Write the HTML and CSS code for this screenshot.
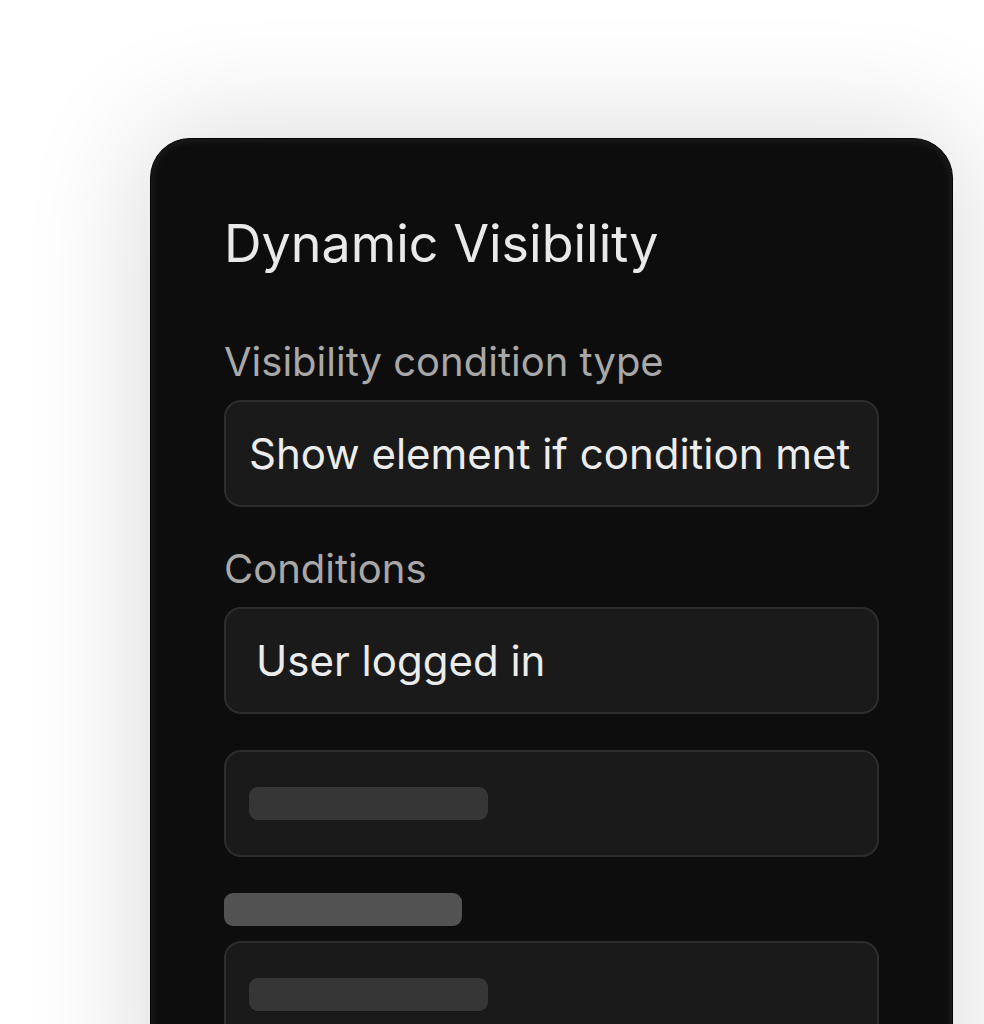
FILE: index.html
```html
<!DOCTYPE html>
<html>
<head>
<meta charset="utf-8">
<link rel="stylesheet" href="styles.css">
</head>
<body>
<div class="stage">
  <div class="card">
    <h1 class="title">Dynamic Visibility</h1>
    <div class="label">Visibility condition type</div>
    <div class="field"><span class="value value-a">Show element if condition met</span></div>
    <div class="label label-2">Conditions</div>
    <div class="field"><span class="value value-b">User logged in</span></div>
    <div class="field field-ph"><span class="ph"></span></div>
    <div class="label-ph"></div>
    <div class="field field-ph"><span class="ph"></span></div>
  </div>
</div>
</body>
</html>
```
FILE: styles.css
```css
html, body {
  margin: 0;
  padding: 0;
  background: #ffffff;
  height: 1024px;
  overflow: hidden;
}
.stage {
  padding: 138px 31px 0 150px;
  height: 886px;
  overflow: hidden;
}
.card {
  box-sizing: border-box;
  width: 803px;
  height: 1000px;
  background: #0d0d0d;
  border: 1px solid #030303;
  border-radius: 40px;
  padding: 73px 73px 0 73px;
  box-shadow: 0 0 120px 10px rgba(0, 0, 0, 0.14), inset 0 0 8px 1px rgba(255, 255, 255, 0.09);
  font-family: Inter, "Liberation Sans", sans-serif;
}
.title {
  margin: 0;
  font-size: 52px;
  font-weight: 400;
  line-height: 64px;
  color: #e9e9e9;
}
.label {
  margin-top: 62px;
  font-size: 40px;
  line-height: 48px;
  color: #a8a8a8;
}
.label-2 {
  margin-top: 38px;
}
.field {
  box-sizing: border-box;
  margin-top: 14px;
  height: 107px;
  background: #1a1a1a;
  border: 2px solid #2d2d2d;
  border-radius: 17px;
  display: flex;
  align-items: center;
  padding-left: 23px;
}
.value {
  font-size: 42px;
  color: #ececec;
}
.value-b {
  padding-left: 7px;
}
.field-ph {
  margin-top: 36px;
}
.ph {
  display: block;
  width: 239px;
  height: 33px;
  border-radius: 9px;
  background: #363636;
}
.label-ph {
  margin-top: 36px;
  width: 238px;
  height: 33px;
  border-radius: 9px;
  background: #525252;
}
.label-ph + .field-ph {
  margin-top: 15px;
}
```
